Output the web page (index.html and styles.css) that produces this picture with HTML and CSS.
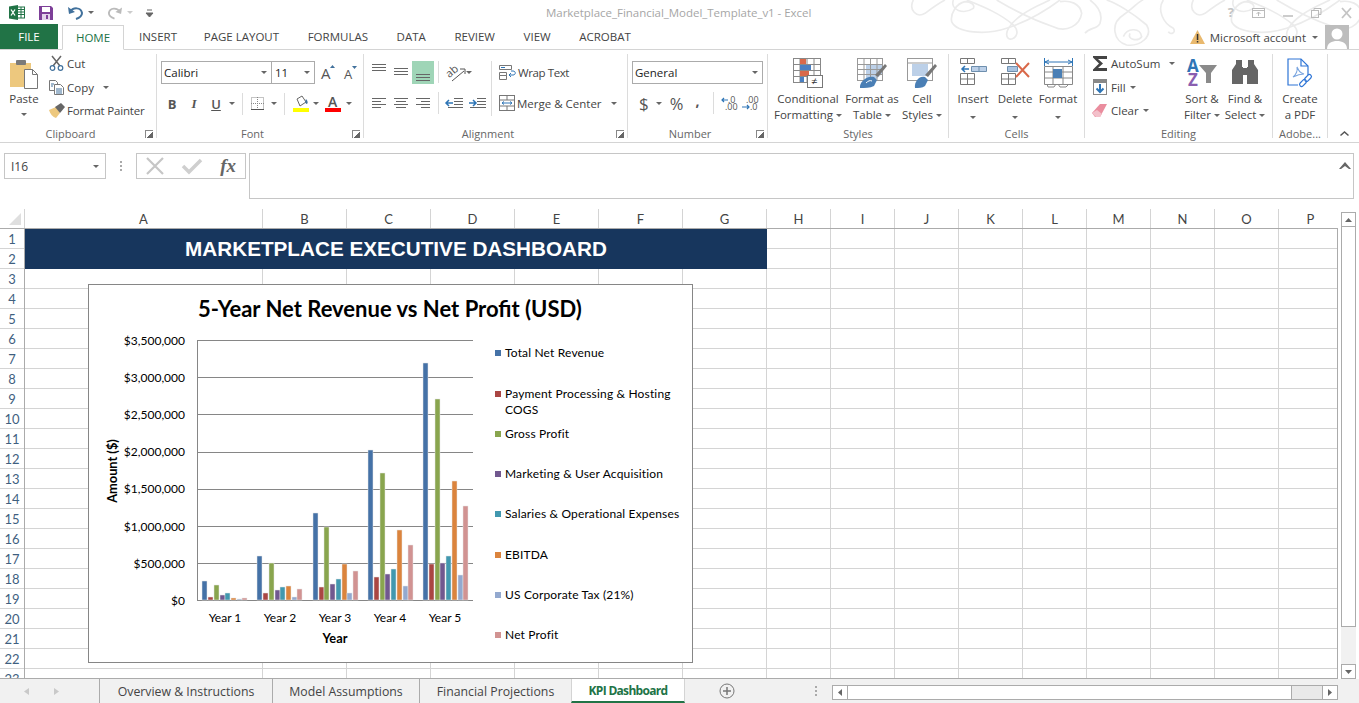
FILE: index.html
```html
<!DOCTYPE html>
<html lang="en">
<head>
<meta charset="UTF-8">
<title>Marketplace_Financial_Model_Template_v1 - Excel</title>
<link rel="stylesheet" href="styles.css">
</head>
<body>
<div class="app">

  <!-- title bar -->
  <div class="titlebar">
    <svg class="flourish" width="449" height="50" viewBox="0 0 1347 150" fill="none" stroke="#ebebeb" stroke-width="5">
      <g id="swirl">
        <path d="M10 0C-5 30 20 55 45 40 65 25 85 10 105 0"/>
        <path d="M130 0c-10 30 30 45 60 25 5-10-5-20-25-20-25 5-45 35-40 60 15 35 105 40 165 20 60-20 120-55 160-85"/>
        <path d="M170 0c50 20 100 40 140 75 25 25 0 50-15 40-15-15 5-45 40-70 35-25 65-35 85-45"/>
        <path d="M260 0c50 30 110 60 170 80 40 20 80-5 85-40-5-30-35-40-65-35"/>
        <path d="M525 100c15-20 35-10 45-30 10-30-10-55-30-70"/>
        <path d="M590 0c30 10 80 40 120 75 20 35-20 65-60 60-40-10-50-65-10-90 30-20 50-45 60-45"/>
        <path d="M640 110c10-25 50-30 55 0-10 15-45 10-35-10"/>
        <path d="M760 0c-20 30 0 70 30 85 10 15-10 20-15 10"/>
      </g>
      <use href="#swirl" x="840"/>
    </svg>
    <div class="qat">
      <svg class="ic-xl" width="16" height="15" viewBox="0 0 16 15"><rect x="6" y="2" width="9.500" height="11" fill="#fff" stroke="#217346"/><path d="M9 4.500h6M9 7h6M9 9.500h6M12 2v11" stroke="#217346" fill="none"/><path d="M0 1.500L9 0v15l-9-1.500z" fill="#217346"/><path d="M2 4.500l4 6M6 4.500l-4 6" stroke="#fff" stroke-width="1.300"/></svg>
      <svg class="ic-save" width="14" height="14" viewBox="0 0 14 14"><path d="M0 0h12l2 2v12H0z" fill="#7d3f98"/><rect x="3" y="1" width="8" height="5" fill="#fff"/><rect x="3" y="8" width="8" height="6" fill="#e3d3ea"/><rect x="7" y="9" width="2" height="4" fill="#7d3f98"/></svg>
      <svg class="undo" width="16" height="14" viewBox="0 0 16 14" fill="none"><path d="M2 6c3-5 11-5 12 1 0 3-3 5-6 6" stroke="#41719c" stroke-width="2"/><path d="M0 1l1 7 6-2z" fill="#41719c"/></svg>
      <i class="caret q1"></i>
      <svg class="redo" width="15" height="14" viewBox="0 0 16 14" fill="none"><path d="M14 6C11 1 3 1 2 7c0 3 3 5 6 6" stroke="#bbb" stroke-width="2"/><path d="M16 1l-1 7-6-2z" fill="#bbb"/></svg>
      <i class="caret q2"></i>
      <svg class="custom" width="7" height="8" viewBox="0 0 7 8"><path d="M1 1h5M0 4h7l-3.500 4z" stroke="#666" fill="#666" stroke-width="1"/></svg>
    </div>
    <div class="doc-title">Marketplace_Financial_Model_Template_v1 - Excel</div>
    <div class="win-btns">
      <span class="win-help">?</span>
      <svg width="13" height="10" viewBox="0 0 13 10" fill="none" stroke="#bbb"><rect x=".5" y=".5" width="12" height="9"/><path d="M.5 2.500h12"/><path d="M6.500 8V4M4.500 6l2-2 2 2"/></svg>
      <svg width="10" height="10" viewBox="0 0 10 10"><rect y="7" width="10" height="2" fill="#ccc"/></svg>
      <svg width="11" height="10" viewBox="0 0 11 10" fill="none" stroke="#bbb"><rect x=".5" y="2.500" width="7" height="7"/><path d="M3 2.500v-2h7v6H7.500" /></svg>
      <svg width="13" height="10" viewBox="0 0 13 10" stroke="#c4c4c4" stroke-width="1.800"><path d="M2 0l9 10M11 0L2 10"/></svg>
    </div>
  </div>

  <!-- tabs -->
  <div class="tabs">
    <div class="tab-file">FILE</div>
    <div class="tab-home">HOME</div>
    <div class="tab">INSERT</div>
    <div class="tab">PAGE LAYOUT</div>
    <div class="tab">FORMULAS</div>
    <div class="tab">DATA</div>
    <div class="tab">REVIEW</div>
    <div class="tab">VIEW</div>
    <div class="tab">ACROBAT</div>
    <div class="account">
      <svg width="15" height="14" viewBox="0 0 15 14"><path d="M7.500 0L15 14H0z" fill="#e9b96e"/><rect x="6.800" y="4" width="1.500" height="6" fill="#333"/><rect x="6.800" y="11" width="1.500" height="1.500" fill="#333"/></svg>
      <span class="acct-name">Microsoft account</span>
      <i class="caret"></i>
      <svg class="avatar" width="24" height="24" viewBox="0 0 24 24"><rect width="24" height="24" fill="#bdbdbd"/><circle cx="12" cy="9" r="5.500" fill="#fff"/><path d="M2 24c0-6 5-8 10-8s10 2 10 8z" fill="#fff"/></svg>
    </div>
  </div>

  <!-- ribbon -->
  <div class="ribbon">
    <div class="group g-clip">
      <div class="group-body clip-body">
        <div class="big paste">
          <svg width="28" height="28" viewBox="0 0 28 28"><path d="M0 3h21v24H0z" fill="#edc87e"/><rect x="6" y="0" width="10" height="5" rx="1" fill="#7a7a7a"/><path d="M14.500 9.500h8l5 5v14h-13z" fill="#fff" stroke="#777"/><path d="M22.500 9.500v5h5" fill="none" stroke="#777"/></svg>
          <span>Paste</span>
          <i class="caret"></i>
        </div>
        <div class="clip-list">
          <div class="rowitem"><svg width="15" height="15" viewBox="0 0 15 15" fill="none"><path d="M3 0l8 10M12 0L4 10" stroke="#666" stroke-width="1.500"/><circle cx="3.500" cy="12" r="2.300" stroke="#41719c" stroke-width="1.200"/><circle cx="11.500" cy="12" r="2.300" stroke="#41719c" stroke-width="1.200"/></svg><span>Cut</span></div>
          <div class="rowitem"><svg width="15" height="15" viewBox="0 0 15 15" fill="#fff" stroke="#777"><path d="M.5.500h6l2 2v8H.5z"/><path d="M5.500 4.500h6l3 3v7h-9z"/><path d="M7 9h6M7 11h6M7 13h6M2 4h3M2 6h2" stroke="#41719c"/></svg><span>Copy</span><i class="caret copy-caret"></i></div>
          <div class="rowitem"><svg width="16" height="15" viewBox="0 0 16 15"><path d="M0 7l7-3 4 6-4 5c-3-1-6-4-7-8z" fill="#edc87e"/><path d="M6 4l6-4 4 4-5 6z" fill="#666"/></svg><span class="painter">Format Painter</span></div>
        </div>
      </div>
      <div class="group-label has-launcher">Clipboard<i class="launcher"></i></div>
    </div>

    <div class="group g-font">
      <div class="group-body font-body">
        <div class="font-row">
          <div class="combo font-name">Calibri<i class="caret"></i></div>
          <div class="combo font-size">11<i class="caret"></i></div>
          <svg class="grow" width="15" height="15" viewBox="0 0 15 15"><text x="0" y="14" class="big-a">A</text><path d="M9 3l2.500-3L14 3z" fill="#41719c"/></svg>
          <svg class="shrink" width="13" height="13" viewBox="0 0 13 13"><text x="0" y="13" class="small-a">A</text><path d="M8 0h5l-2.500 3z" fill="#41719c"/></svg>
        </div>
        <div class="font-row row2">
          <b class="fmt">B</b>
          <i class="fmt it">I</i>
          <u class="fmt und">U</u>
          <i class="caret c-u"></i>
          <i class="vsep"></i>
          <svg class="borders" width="13" height="13" viewBox="0 0 13 13" fill="none" stroke="#888" stroke-dasharray="1 1"><rect x=".5" y=".5" width="12" height="12"/><path d="M6.500 0v13M0 6.500h13"/><path d="M0 12.500h13" stroke="#555" stroke-dasharray="none"/></svg>
          <i class="caret c-b"></i>
          <i class="vsep"></i>
          <svg class="fill" width="16" height="17" viewBox="0 0 16 17"><path d="M4 4l5-3 4 6-6 4z" fill="#fff" stroke="#666"/><path d="M13 4c2 2 2 4 1 5-2 0-2-3-1-5z" fill="#41719c"/><rect y="13" width="16" height="4" fill="#ffff00"/></svg>
          <i class="caret c-f"></i>
          <svg class="fcolor" width="16" height="17" viewBox="0 0 16 17"><text x="3" y="12" class="color-a">A</text><rect y="13" width="16" height="4" fill="#ff0000"/></svg>
          <i class="caret c-c"></i>
        </div>
      </div>
      <div class="group-label has-launcher">Font<i class="launcher"></i></div>
    </div>

    <div class="group g-align">
      <div class="group-body align-body">
        <div class="align-left">
          <div class="align-row">
            <svg class="ai" width="22" height="23" viewBox="0 0 22 23"><path d="M4 3.500h14M4 6.500h14M4 9.500h14" stroke="#666" fill="none"/></svg>
            <svg class="ai" width="22" height="23" viewBox="0 0 22 23"><path d="M4 7.500h14M4 10.500h14M4 13.500h14" stroke="#666" fill="none"/></svg>
            <svg class="ai on" width="22" height="23" viewBox="0 0 22 23"><path d="M4 13.500h14M4 16.500h14M4 19.500h14" stroke="#666" fill="none"/></svg>
            <i class="vsep"></i>
            <svg class="orient" width="20" height="18" viewBox="0 0 20 18"><text x="0" y="11" class="orient-t" transform="rotate(-40 6 8)">ab</text><path d="M6 17l12-10M14 5h5v5" fill="none" stroke="#555"/></svg>
            <i class="caret"></i>
          </div>
          <div class="align-row row2">
            <svg class="ai" width="22" height="16" viewBox="0 0 22 16"><path d="M4 2.500h14M4 5.500h9M4 8.500h14M4 11.500h9" stroke="#666" fill="none"/></svg>
            <svg class="ai" width="22" height="16" viewBox="0 0 22 16"><path d="M4 2.500h14M6 5.500h10M4 8.500h14M6 11.500h10" stroke="#666" fill="none"/></svg>
            <svg class="ai" width="22" height="16" viewBox="0 0 22 16"><path d="M4 2.500h14M9 5.500h9M4 8.500h14M9 11.500h9" stroke="#666" fill="none"/></svg>
            <i class="vsep"></i>
            <svg class="ai indent" width="22" height="16" viewBox="0 0 22 16"><path d="M10 2.500h9M10 5.500h9M10 8.500h9M4 11.500h15" stroke="#666" fill="none"/><path d="M2 7h7M5 4L2 7l3 3" stroke="#2e75b6" stroke-width="1.500" fill="none"/></svg>
            <svg class="ai" width="22" height="16" viewBox="0 0 22 16"><path d="M11 2.500h9M11 5.500h9M11 8.500h9M4 11.500h16" stroke="#666" fill="none"/><path d="M3 7h7M7 4l3 3-3 3" stroke="#2e75b6" stroke-width="1.500" fill="none"/></svg>
          </div>
        </div>
        <i class="vsep tall"></i>
        <div class="align-right">
          <div class="rowitem"><svg width="17" height="15" viewBox="0 0 17 15" fill="none" stroke="#777"><path d="M.5.500h12v4H.5zM.5 7.500h7v3h-7zM.5 10.500h7v4h-7z"/><path d="M2 2.500h4" stroke="#2e75b6"/><path d="M10 10h4c3 0 3-4 0-4h-2M12 8l-2 2 2 2" stroke="#2e75b6"/></svg><span class="wrap-t">Wrap Text</span></div>
          <div class="rowitem merge"><svg width="16" height="16" viewBox="0 0 16 16" fill="none" stroke="#777"><rect x=".5" y=".5" width="15" height="15"/><path d="M.5 5h15M.5 11h15M8 .5V5M8 11v4.500"/><path d="M3 8h10M5 6.500L3 8l2 1.500M11 6.500L13 8l-2 1.500" stroke="#2e75b6"/></svg><span>Merge &amp; Center</span><i class="caret"></i></div>
        </div>
      </div>
      <div class="group-label has-launcher">Alignment<i class="launcher"></i></div>
    </div>

    <div class="group g-num">
      <div class="group-body num-body">
        <div class="combo num-format">General<i class="caret"></i></div>
        <div class="num-row">
          <span class="dollar">$</span><i class="caret"></i>
          <span class="pct">%</span>
          <span class="comma">,</span>
          <i class="vsep"></i>
          <svg width="20" height="15" viewBox="0 0 20 15"><text x="7" y="7" class="dec">.0</text><text x="4" y="14" class="dec">.00</text><path d="M7 4H1M3 2L1 4l2 2" stroke="#2e75b6" stroke-width="1.200" fill="none"/></svg>
          <svg width="20" height="15" viewBox="0 0 20 15"><text x="5" y="7" class="dec">.00</text><text x="9" y="14" class="dec">.0</text><path d="M1 11h7M6 9l2 2-2 2" stroke="#2e75b6" stroke-width="1.200" fill="none"/></svg>
        </div>
      </div>
      <div class="group-label has-launcher">Number<i class="launcher"></i></div>
    </div>

    <div class="group g-styles">
      <div class="group-body tools">
        <div class="big w-cond">
          <svg width="30" height="30" viewBox="0 0 30 30"><g fill="none" stroke="#888"><rect x=".5" y=".5" width="27" height="24"/><path d="M7 .5v24M14 .5v24M21 .5v24M.5 6.500h27M.5 12.500h27M.5 18.500h27"/></g><rect x="7" y="1" width="6" height="5" fill="#d9694a"/><rect x="7" y="7" width="11" height="5" fill="#4a7fc1"/><rect x="7" y="13" width="9" height="5" fill="#d9694a"/><rect x="7" y="19" width="4" height="5" fill="#4a7fc1"/><rect x="14.500" y="17.500" width="15" height="12" fill="#fff" stroke="#777"/><text x="18" y="27" class="neq">≠</text></svg>
          <span>Conditional<br>Formatting<i class="caret inl"></i></span>
        </div>
        <div class="big w-table">
          <svg width="30" height="30" viewBox="0 0 30 30"><path d="M9 7h17v8l-8 7H9z" fill="#bcd0e8"/><g fill="none" stroke="#999"><rect x=".5" y=".5" width="25" height="22"/><path d="M.5 6.500h25M.5 11.500h25M.5 16.500h25M7 .5v22M13.500 .5v22M20 .5v22"/></g><path d="M28 6l2 2-9 11-3-2z" fill="#777"/><path d="M3 30c-1-6 7-13 14-11l3 3-3 6c-4 2-9 2-14 2z" fill="#4a7fb5"/><path d="M9 25c2-2 4-3 6-2" stroke="#fff" fill="none"/></svg>
          <span>Format as<br>Table<i class="caret inl"></i></span>
        </div>
        <div class="big w-cell">
          <svg width="30" height="30" viewBox="0 0 30 30"><rect x=".5" y=".5" width="25" height="22" fill="#fff" stroke="#999"/><path d="M.5 5h25" stroke="#999"/><rect x="5" y="6" width="16" height="12" fill="#bcd0e8"/><path d="M28 6l2 2-9 11-3-2z" fill="#777"/><path d="M8 30c-1-6 4-13 10-11l3 3-3 6c-3 2-6 2-10 2z" fill="#4a7fb5"/></svg>
          <span>Cell<br>Styles<i class="caret inl"></i></span>
        </div>
      </div>
      <div class="group-label">Styles</div>
    </div>

    <div class="group g-cells">
      <div class="group-body tools">
        <div class="big w-ins">
          <svg width="27" height="30" viewBox="0 0 27 30" fill="none" stroke="#777"><path d="M.5 .5h14v5H.5zM7.500 .5v5M.5 15.500h14v11H.5zM.5 21h14M7.500 15.500v11"/><path d="M11.500 8.500h15v5h-15zM19 8.500v5" stroke="#6e8fae" fill="#bcd0e8"/><path d="M9 11H2M5 8l-3 3 3 3" stroke="#2e75b6" stroke-width="1.500"/></svg>
          <span>Insert<br><i class="caret"></i></span>
        </div>
        <div class="big w-del">
          <svg width="29" height="30" viewBox="0 0 29 30" fill="none" stroke="#777"><path d="M.5 .5h14v5H.5zM7.500 .5v5M.5 15.500h14v11H.5zM.5 21h14M7.500 15.500v11"/><path d="M6.500 8.500h10v5h-10z" stroke="#6e8fae" fill="#a9c3e0"/><path d="M15 5l13 14M28 5L15 19" stroke="#d9694a" stroke-width="2"/></svg>
          <span>Delete<br><i class="caret"></i></span>
        </div>
        <div class="big w-fmt">
          <svg width="29" height="30" viewBox="0 0 29 30" fill="none"><path d="M1 4h27" stroke="#2e75b6"/><path d="M.5 0v8M28.500 0v8M5 2L1 4l4 2M24 2l4 2-4 2" stroke="#2e75b6"/><path d="M.5 8.500h28v18H.5z" stroke="#888"/><path d="M9 8.500v18M19 8.500v18M.5 14h28M.5 20h28" stroke="#888"/><rect x="9" y="11" width="9" height="9" fill="#4a7fb5"/><path d="M3 26l1 3h6l2-3M14 26l2 3h6l3-3" stroke="#888"/></svg>
          <span>Format<br><i class="caret"></i></span>
        </div>
      </div>
      <div class="group-label">Cells</div>
    </div>

    <div class="group g-edit">
      <div class="group-body edit-body">
        <div class="edit-list">
          <div class="rowitem"><svg width="16" height="15" viewBox="0 0 16 15"><path d="M1 0h14v3H6l5 4.500L6 12h9v3H1v-1.500L7 7.500 1 1.500z" fill="#444"/></svg><span>AutoSum</span><i class="caret auto-caret"></i></div>
          <div class="rowitem"><svg width="16" height="16" viewBox="0 0 16 16" fill="none"><rect x="1.500" y=".5" width="13" height="15" stroke="#888" fill="#fff"/><rect x="2" y="1" width="12" height="3" fill="#888"/><path d="M8 5v8M4.500 9.500L8 13l3.500-3.500" stroke="#2e75b6" stroke-width="2"/></svg><span>Fill</span><i class="caret"></i></div>
          <div class="rowitem"><svg width="16" height="13" viewBox="0 0 16 13"><path d="M0 9l8-9h7L8 13H3z" fill="#ea8d9e"/><path d="M0 9l4 4h4l2-3-5-4z" fill="#f3c0ca"/></svg><span>Clear</span><i class="caret"></i></div>
        </div>
        <div class="big w-sort">
          <svg width="30" height="30" viewBox="0 0 30 30"><text x="0" y="14" class="sort-a">A</text><text x="1" y="28" class="sort-z">Z</text><path d="M12 7h18l-6 8v10h-5V15z" fill="#8a8a8a"/></svg>
          <span>Sort &amp;<br>Filter<i class="caret inl"></i></span>
        </div>
        <div class="big w-find">
          <svg width="26" height="24" viewBox="0 0 26 24" fill="#666"><path d="M0 24V10l4-6V0h6v7h1v17z"/><path d="M26 24V10l-4-6V0h-6v7h-1v17z"/><rect x="11" y="8" width="4" height="7"/></svg>
          <span>Find &amp;<br>Select<i class="caret inl"></i></span>
        </div>
      </div>
      <div class="group-label">Editing</div>
    </div>

    <div class="group g-adobe">
      <div class="group-body tools">
        <div class="big w-pdf">
          <svg width="26" height="30" viewBox="0 0 26 30" fill="none" stroke="#2e75d6" stroke-width="1.200"><path d="M11 27H1V1h13l7 7v9"/><path d="M14 1v7h7"/><path d="M6 19c3-2 5-7 4-10 2 4 3 6 7 7-3 0-7 1-11 3z" stroke="#7aa5df"/><rect x="12" y="23" width="8" height="4" rx="2" transform="rotate(-45 16 25)"/><rect x="17" y="18" width="8" height="4" rx="2" transform="rotate(-45 21 20)"/></svg>
          <span>Create<br>a PDF</span>
        </div>
      </div>
      <div class="group-label">Adobe...</div>
    </div>
    <div class="collapse"><svg width="9" height="5" viewBox="0 0 9 5" fill="none" stroke="#555" stroke-width="1.500"><path d="M.5 4.500l4-3.500 4 3.500"/></svg></div>
  </div>

  <!-- formula bar -->
  <div class="formula">
    <div class="namebox">I16<i class="caret"></i></div>
    <div class="dots"></div>
    <div class="fx-btns">
      <svg width="18" height="16" viewBox="0 0 18 16" stroke="#c6c6c6" stroke-width="2.200"><path d="M1 0l16 16M17 0L1 16"/></svg>
      <svg width="20" height="16" viewBox="0 0 20 16" fill="none" stroke="#cfcfcf" stroke-width="3.500"><path d="M1 8l6 6L19 2"/></svg>
      <span class="fx">fx</span>
    </div>
    <div class="fbox"><svg width="12" height="7" viewBox="0 0 12 7"><path d="M0 7l6-7 6 7-2 0-4-3-4 3z" fill="#666"/></svg></div>
  </div>

  <!-- sheet -->
  <div class="sheet">
    <div class="grid-wrap">
      <div class="col-heads">
        <div class="corner"><i></i></div>
        <div class="ch a">A</div><div class="ch b">B</div><div class="ch b">C</div><div class="ch b">D</div><div class="ch b">E</div><div class="ch b">F</div><div class="ch b">G</div>
        <div class="ch c">H</div><div class="ch c">I</div><div class="ch c">J</div><div class="ch c">K</div><div class="ch c">L</div><div class="ch c">M</div><div class="ch c">N</div><div class="ch c">O</div><div class="ch last">P</div>
      </div>
      <div class="body-wrap">
        <div class="row-heads">
          <div class="rh">1</div><div class="rh">2</div><div class="rh">3</div><div class="rh">4</div><div class="rh">5</div><div class="rh">6</div><div class="rh">7</div><div class="rh">8</div><div class="rh">9</div><div class="rh">10</div><div class="rh">11</div><div class="rh">12</div><div class="rh">13</div><div class="rh">14</div><div class="rh">15</div><div class="rh">16</div><div class="rh">17</div><div class="rh">18</div><div class="rh">19</div><div class="rh">20</div><div class="rh">21</div><div class="rh">22</div><div class="rh">23</div>
        </div>
        <div class="cells">
          <div class="gc a"></div><div class="gc b"></div><div class="gc b"></div><div class="gc b"></div><div class="gc b"></div><div class="gc b"></div><div class="gc b"></div>
          <div class="gc c"></div><div class="gc c"></div><div class="gc c"></div><div class="gc c"></div><div class="gc c"></div><div class="gc c"></div><div class="gc c"></div><div class="gc c"></div>

          <div class="banner">MARKETPLACE EXECUTIVE DASHBOARD</div>

          <!-- chart sits on top of the cells -->
          <div class="chart">
            <svg width="603" height="377" viewBox="0 0 603 377">
              <text x="301" y="32" class="c-title" text-anchor="middle">5-Year Net Revenue vs Net Profit (USD)</text>
              <g class="c-axis" text-anchor="end">
                <text x="96" y="60">$3,500,000</text>
                <text x="96" y="97">$3,000,000</text>
                <text x="96" y="134">$2,500,000</text>
                <text x="96" y="171">$2,000,000</text>
                <text x="96" y="208">$1,500,000</text>
                <text x="96" y="246">$1,000,000</text>
                <text x="96" y="283">$500,000</text>
                <text x="96" y="320">$0</text>
              </g>
              <g stroke="#868686">
                <path d="M108 55.500h276M108 92.500h276M108 129.500h276M108 167.500h276M108 204.500h276M108 241.500h276M108 278.500h276M108 315.500h276M108.500 55v261"/>
              </g>
              <g class="bars">
                <g fill="#4572a7"><rect x="113" y="296" width="5" height="19"/><rect x="168" y="271" width="5" height="44"/><rect x="224" y="228" width="5" height="87"/><rect x="279" y="165" width="5" height="150"/><rect x="334" y="78" width="5" height="237"/></g>
                <g fill="#aa4643"><rect x="119" y="312" width="5" height="3"/><rect x="174" y="308" width="5" height="7"/><rect x="230" y="302" width="5" height="13"/><rect x="285" y="292" width="5" height="23"/><rect x="340" y="279" width="5" height="36"/></g>
                <g fill="#89a54e"><rect x="125" y="300" width="5" height="15"/><rect x="180" y="278" width="5" height="37"/><rect x="235" y="242" width="5" height="73"/><rect x="291" y="188" width="5" height="127"/><rect x="346" y="114" width="5" height="201"/></g>
                <g fill="#71588f"><rect x="131" y="310" width="5" height="5"/><rect x="186" y="305" width="5" height="10"/><rect x="241" y="299" width="5" height="16"/><rect x="296" y="289" width="5" height="26"/><rect x="351" y="278" width="5" height="37"/></g>
                <g fill="#4198af"><rect x="136" y="308" width="5" height="7"/><rect x="191" y="302" width="5" height="13"/><rect x="247" y="294" width="5" height="21"/><rect x="302" y="284" width="5" height="31"/><rect x="357" y="271" width="5" height="44"/></g>
                <g fill="#db843d"><rect x="142" y="313" width="5" height="2"/><rect x="197" y="301" width="5" height="14"/><rect x="253" y="279" width="5" height="36"/><rect x="308" y="245" width="5" height="70"/><rect x="363" y="196" width="5" height="119"/></g>
                <g fill="#93a9cf"><rect x="148" y="314" width="5" height="1"/><rect x="203" y="312" width="5" height="3"/><rect x="258" y="308" width="5" height="7"/><rect x="314" y="301" width="5" height="14"/><rect x="369" y="290" width="5" height="25"/></g>
                <g fill="#d19392"><rect x="153" y="313" width="5" height="2"/><rect x="208" y="304" width="5" height="11"/><rect x="264" y="286" width="5" height="29"/><rect x="319" y="260" width="5" height="55"/><rect x="374" y="221" width="5" height="94"/></g>
              </g>
              <g class="c-axis" text-anchor="middle">
                <text x="136" y="337">Year 1</text>
                <text x="191" y="337">Year 2</text>
                <text x="246" y="337">Year 3</text>
                <text x="301" y="337">Year 4</text>
                <text x="356" y="337">Year 5</text>
              </g>
              <text x="246" y="358" class="c-bold" text-anchor="middle">Year</text>
              <text class="c-bold" text-anchor="middle" transform="translate(28 186) rotate(-90)">Amount ($)</text>
              <g class="c-legend">
                <rect x="406" y="65" width="6" height="6" fill="#4572a7"/><text x="416" y="72">Total Net Revenue</text>
                <rect x="406" y="106" width="6" height="6" fill="#aa4643"/><text x="416" y="113">Payment Processing &amp; Hosting</text><text x="416" y="129">COGS</text>
                <rect x="406" y="146" width="6" height="6" fill="#89a54e"/><text x="416" y="153">Gross Profit</text>
                <rect x="406" y="186" width="6" height="6" fill="#71588f"/><text x="416" y="193">Marketing &amp; User Acquisition</text>
                <rect x="406" y="226" width="6" height="6" fill="#4198af"/><text x="416" y="233">Salaries &amp; Operational Expenses</text>
                <rect x="406" y="267" width="6" height="6" fill="#db843d"/><text x="416" y="274">EBITDA</text>
                <rect x="406" y="307" width="6" height="6" fill="#93a9cf"/><text x="416" y="314">US Corporate Tax (21%)</text>
                <rect x="406" y="347" width="6" height="6" fill="#d19392"/><text x="416" y="354">Net Profit</text>
              </g>
            </svg>
          </div>
        </div>
      </div>
    </div>
    <div class="vscroll">
      <div class="sb-btn"><svg width="7" height="4" viewBox="0 0 7 4"><path d="M0 4l3.500-4L7 4z" fill="#666"/></svg></div>
      <div class="sb-thumb"></div>
      <div class="sb-track"></div>
      <div class="sb-btn"><svg width="7" height="4" viewBox="0 0 7 4"><path d="M0 0l3.500 4L7 0z" fill="#666"/></svg></div>
    </div>
  </div>

  <!-- sheet tabs -->
  <div class="statusbar">
    <div class="nav-arrows">
      <svg width="5" height="7" viewBox="0 0 5 7"><path d="M5 0L0 3.500 5 7z" fill="#c9c9c9"/></svg>
      <svg width="5" height="7" viewBox="0 0 5 7"><path d="M0 0l5 3.500L0 7z" fill="#c9c9c9"/></svg>
    </div>
    <div class="stab s1">Overview &amp; Instructions</div>
    <div class="stab s2">Model Assumptions</div>
    <div class="stab s3">Financial Projections</div>
    <div class="stab active">KPI Dashboard</div>
    <svg class="plus" width="16" height="16" viewBox="0 0 16 16" fill="none" stroke="#777"><circle cx="8" cy="8" r="7"/><path d="M8 4v8M4 8h8" stroke-width="1.500"/></svg>
    <div class="dots hdots"></div>
    <div class="hscroll">
      <div class="hb"><svg width="4" height="7" viewBox="0 0 4 7"><path d="M4 0L0 3.500 4 7z" fill="#666"/></svg></div>
      <div class="h-thumb"></div>
      <div class="h-track"></div>
      <div class="hb right"><svg width="4" height="7" viewBox="0 0 4 7"><path d="M0 0l4 3.500L0 7z" fill="#666"/></svg></div>
    </div>
  </div>
</div>
</body>
</html>
```

FILE: styles.css
```css
* {
    box-sizing: border-box;
}

html, body {
    margin: 0;
    padding: 0;
    height: 100%;
    overflow: hidden;
}

body {
    background: #fff;
    font-family: "Open Sans", "Noto Sans", sans-serif;
    font-size: 12px;
    color: #444;
}

.app {
    width: 1359px;
    height: 703px;
    display: flex;
    flex-direction: column;
}

svg {
    display: block;
    flex: none;
    overflow: visible;
}

/* little down arrow used all over the ribbon */
.caret {
    display: inline-block;
    width: 0;
    height: 0;
    border-left: 3.5px solid transparent;
    border-right: 3.5px solid transparent;
    border-top: 3.5px solid #666;
    flex: none;
}

.caret.inl {
    margin-left: 3px;
    vertical-align: 2px;
}

/* title bar */
.titlebar {
    height: 25px;
    position: relative;
    display: flex;
    align-items: center;
    flex: none;
}

.flourish {
    position: absolute;
    right: 0;
    top: 0;
    overflow: hidden;
}

.qat {
    display: flex;
    align-items: center;
    width: 546px;
    padding-left: 9px;
    flex: none;
}

.ic-save {
    margin-left: 14px;
}

.undo {
    margin-left: 15px;
}

.q1 {
    margin-left: 4px;
}

.redo {
    margin-left: 13px;
}

.q2 {
    margin-left: 5px;
    border-top-color: #ccc;
}

.custom {
    margin-left: 13px;
}

.doc-title {
    color: #a6a6a6;
    font-size: 11.5px;
    letter-spacing: -.03px;
    position: relative;
}

.win-btns {
    position: absolute;
    right: 6px;
    top: 6px;
    display: flex;
    gap: 18px;
    align-items: center;
}

.win-help {
    font: bold 13px "Open Sans", sans-serif;
    color: #c4c4c4;
    line-height: 13px;
}

/* ribbon tabs */
.tabs {
    height: 25px;
    display: flex;
    align-items: flex-end;
    border-bottom: 1px solid #d4d4d4;
    flex: none;
    position: relative;
    font-size: 11.5px;
}

.tab-file {
    width: 58px;
    height: 25px;
    background: #217346;
    color: #fff;
    display: flex;
    align-items: center;
    justify-content: center;
}

.tab-home {
    width: 62px;
    height: 25px;
    margin-left: 4px;
    border: 1px solid #d4d4d4;
    border-bottom: 1px solid #fff;
    margin-bottom: -1px;
    background: #fff;
    color: #217346;
    display: flex;
    align-items: center;
    justify-content: center;
    z-index: 1;
}

.tab {
    height: 25px;
    padding: 0 14.3px;
    display: flex;
    align-items: center;
}

.tab-home + .tab {
    padding-left: 15px;
    padding-right: 12.5px;
}

.account {
    margin-left: auto;
    height: 24px;
    display: flex;
    align-items: center;
    padding-right: 10px;
    position: relative;
}

.acct-name {
    color: #444;
    margin: 0 6px 0 5px;
}

.avatar {
    margin-left: 7px;
}

/* ribbon */
.ribbon {
    height: 93px;
    display: flex;
    border-bottom: 1px solid #d4d4d4;
    flex: none;
    padding-top: 4px;
    position: relative;
    font-size: 11.5px;
}

.group {
    display: flex;
    flex-direction: column;
    border-right: 1px solid #dcdcdc;
    height: 84px;
    flex: none;
    position: relative;
}

.group-body {
    height: 71px;
    flex: none;
}

.group-label {
    text-align: center;
    font-size: 11px;
    color: #666;
    height: 13px;
    line-height: 18px;
}

.has-launcher {
    padding-right: 15px;
}

.launcher {
    position: absolute;
    right: 3px;
    bottom: 0;
    width: 8px;
    height: 8px;
    border-left: 1px solid #888;
    border-top: 1px solid #888;
    background: linear-gradient(135deg, transparent 55%, #666 55%);
}

.g-clip { width: 157px; }
.g-font { width: 207px; }
.g-align { width: 264px; }
.g-num { width: 140px; }
.g-styles { width: 181px; }
.g-cells { width: 136px; }
.g-edit { width: 188px; }
.g-adobe { width: 55px; }

.clip-body {
    display: flex;
    padding-left: 9px;
}

.big {
    display: flex;
    flex-direction: column;
    align-items: center;
    line-height: 16px;
    text-align: center;
    flex: none;
}

.big > span {
    display: block;
    margin-top: 3px;
    white-space: nowrap;
}

.paste {
    width: 30px;
    margin-right: 10px;
    padding-top: 6px;
}

.paste > span {
    margin-top: 3px;
}

.paste .caret {
    margin-top: 6px;
}

.clip-list {
    display: flex;
    flex-direction: column;
    margin-top: -2px;
}

.rowitem {
    display: flex;
    align-items: center;
    height: 23.5px;
    white-space: nowrap;
}

.rowitem > span {
    margin-left: 3px;
}

.rowitem > .caret {
    margin-left: 4px;
}

.rowitem > .copy-caret {
    margin-left: 9px;
}

.painter {
    letter-spacing: -.2px;
    margin-left: 2px !important;
}

.font-body {
    padding: 7px 0 0 4px;
}

.font-row {
    display: flex;
    align-items: center;
    height: 23px;
}

.combo {
    height: 23px;
    border: 1px solid #ababab;
    padding-left: 2px;
    display: flex;
    align-items: center;
    justify-content: space-between;
    padding-right: 4px;
    color: #222;
}

.font-name {
    width: 111px;
}

.font-size {
    width: 43px;
    border-left: 0;
    padding-left: 3px;
}

.grow {
    margin-left: 6px;
}

.shrink {
    margin-left: 8px;
}

.big-a, .small-a, .color-a {
    font-family: "Open Sans", sans-serif;
    fill: #555;
}

.big-a { font-size: 15px; }
.small-a { font-size: 13px; }
.color-a { font-size: 14px; font-weight: 600; }

.row2 {
    margin-top: 8px;
}

.fmt {
    width: 22px;
    text-align: center;
    font-style: normal;
    font-size: 13px;
    color: #555;
    flex: none;
}

.it {
    font-style: italic;
    font-family: "Liberation Serif", serif;
    font-weight: bold;
}

.und {
    font-weight: 600;
}

.c-u { margin-left: 2px; }
.c-b { margin-left: 7px; }
.c-f { margin-left: 4px; }
.c-c { margin-left: 5px; }
.fcolor { margin-left: 6px; }

.vsep {
    display: block;
    width: 1px;
    height: 22px;
    background: #dcdcdc;
    margin: 0 8px 0 7px;
    flex: none;
}

.vsep.tall {
    height: 55px;
    margin: 0 7px 0 0;
}

.align-body {
    display: flex;
    padding: 7px 0 0 4px;
}

.align-left {
    width: 123px;
    flex: none;
}

.align-row {
    display: flex;
    align-items: flex-start;
    height: 23px;
}

.align-row .vsep {
    margin: 0 7px 0 4px;
}

.align-row .orient {
    margin-top: 3px;
}

.align-row .caret {
    margin: 10px 0 0 0;
}

.align-row.row2 {
    margin-top: 8px;
}

.row2 .ai {
    margin-top: 4px;
}

.row2 .indent {
    margin-left: -2px;
}

.ai.on {
    background: #9fd5b7;
}

.orient-t {
    font-size: 11px;
    fill: #555;
}

.align-right .rowitem > span {
    margin-left: 2px;
}

.wrap-t {
    letter-spacing: -.4px;
}

.merge {
    margin-top: 7px;
}

.merge .caret {
    margin-left: 9px;
}

.num-body {
    padding: 7px 0 0 4px;
}

.num-format {
    width: 131px;
}

.num-row {
    display: flex;
    align-items: center;
    height: 22px;
    margin-top: 8px;
    padding-left: 7px;
}

.dollar {
    font-size: 17px;
    color: #555;
}

.num-row .caret {
    margin-left: 7px;
}

.pct {
    font-size: 16.5px;
    color: #555;
    margin-left: 8px;
}

.comma {
    font-weight: bold;
    font-size: 14px;
    color: #555;
    margin: -6px 0 0 12px;
}

.num-row .vsep {
    margin: 0 7px 0 14px;
}

.dec {
    font: 9px "Open Sans", sans-serif;
    fill: #555;
}

.tools {
    display: flex;
    padding-top: 4px;
}

.neq {
    font: 11px "Open Sans", sans-serif;
    fill: #333;
}

.w-cond { width: 80px; }
.w-table { width: 48px; }
.w-cell { width: 52px; }
.g-cells .tools { padding-left: 3px; }
.w-ins { width: 42px; }
.w-del { width: 42px; }
.w-fmt { width: 44px; }
.w-pdf { width: 54px; }

.edit-body {
    display: flex;
    padding-left: 7px;
}

.edit-list {
    width: 89px;
    flex: none;
    margin-top: -2px;
}

.edit-list .rowitem > span {
    margin-left: 3px;
}

.auto-caret {
    margin-left: 9px !important;
}

.w-sort {
    width: 42px;
    padding-top: 4px;
}

.w-find {
    width: 44px;
    padding-top: 6px;
}

.w-find > span {
    margin-top: 7px;
}

.sort-a, .sort-z {
    font: bold 17px "Open Sans", sans-serif;
}

.sort-a { fill: #2e75b6; }
.sort-z { fill: #8a5fb0; }

.collapse {
    position: absolute;
    right: 10px;
    bottom: 6px;
}

/* formula bar */
.formula {
    height: 66px;
    display: flex;
    flex: none;
    padding: 10px 5px 0 4px;
    background: #fff;
}

.namebox {
    width: 102px;
    height: 26px;
    border: 1px solid #c6c6c6;
    display: flex;
    align-items: center;
    justify-content: space-between;
    padding: 0 6px;
    color: #444;
}

.dots {
    width: 2px;
    height: 10px;
    margin: 8px 14px 0 14px;
    background: repeating-linear-gradient(#aaa 0 2px, transparent 2px 4px);
}

.fx-btns {
    width: 110px;
    height: 26px;
    border: 1px solid #c6c6c6;
    display: flex;
    align-items: center;
    justify-content: space-between;
    padding: 0 9px 0 9px;
}

.fx {
    font: italic bold 19px "Liberation Serif", serif;
    color: #666;
    line-height: 20px;
}

.fbox {
    flex: 1;
    height: 46px;
    margin-left: 3px;
    border: 1px solid #c6c6c6;
    display: flex;
    justify-content: flex-end;
    padding: 8px 2px 0 0;
}

/* sheet */
.sheet {
    height: 470px;
    display: flex;
    flex: none;
    overflow: hidden;
}

.grid-wrap {
    width: 1338px;
    flex: none;
}

.col-heads {
    height: 20px;
    display: flex;
    border-bottom: 1px solid #ababab;
}

.corner {
    width: 25px;
    border-right: 1px solid #d4d4d4;
    position: relative;
    flex: none;
}

.corner i {
    position: absolute;
    right: 3px;
    bottom: 3px;
    width: 0;
    height: 0;
    border-left: 12px solid transparent;
    border-bottom: 12px solid #dfdfdf;
}

.ch {
    border-right: 1px solid #d4d4d4;
    text-align: center;
    font-family: "Lato", sans-serif;
    font-size: 13px;
    line-height: 20px;
    color: #444;
    flex: none;
}

.ch.a, .gc.a { width: 238px; }
.ch.b, .gc.b { width: 84px; }
.ch.c, .gc.c { width: 64px; }
.ch.last { width: 59px; border-right: 0; text-indent: 4px; }

.body-wrap {
    display: flex;
    height: 450px;
    border-bottom: 1px solid #ababab;
    border-right: 1px solid #ababab;
}

.row-heads {
    width: 25px;
    flex: none;
    border-right: 1px solid #ababab;
    overflow: hidden;
}

.rh {
    height: 20px;
    border-bottom: 1px solid #d4d4d4;
    text-align: center;
    font-family: "Lato", sans-serif;
    font-size: 13px;
    line-height: 21px;
    color: #3f5f7f;
}

.cells {
    flex: 1;
    display: flex;
    position: relative;
    background-image: linear-gradient(#d4d4d4 1px, transparent 1px);
    background-size: 100% 20px;
    background-position: 0 19px;
}

.gc {
    border-right: 1px solid #d4d4d4;
    flex: none;
}

.banner {
    position: absolute;
    left: 0;
    top: 0;
    width: 742px;
    height: 40px;
    background: #17365d;
    color: #fff;
    font: bold 20.7px "Liberation Sans", sans-serif;
    text-align: center;
    line-height: 40px;
}

.chart {
    position: absolute;
    left: 63px;
    top: 55px;
    width: 605px;
    height: 379px;
    background: #fff;
    border: 1px solid #868686;
}

.c-title {
    font: bold 22px "Lato", sans-serif;
    fill: #000;
}

.c-axis text {
    font: 12px "Lato", sans-serif;
    fill: #000;
}

.c-legend text {
    font: 12px "Lato", sans-serif;
    letter-spacing: .16px;
    fill: #000;
}

.c-bold {
    font: bold 12.8px "Lato", sans-serif;
    fill: #000;
}

.bars rect {
    stroke: #e6e6e6;
    stroke-width: .5;
}

/* scrollbars */
.vscroll {
    width: 15px;
    margin-left: 3px;
    margin-top: 3px;
    display: flex;
    flex-direction: column;
    background: #f1f1f1;
    flex: none;
}

.sb-btn {
    height: 15px;
    border: 1px solid #ababab;
    background: #fff;
    display: flex;
    align-items: center;
    justify-content: center;
    flex: none;
}

.sb-thumb {
    height: 400px;
    border: 1px solid #ababab;
    border-top: 0;
    background: #fff;
    flex: none;
}

.sb-track {
    flex: 1;
}

.statusbar {
    height: 24px;
    background: #f1f1f1;
    display: flex;
    align-items: center;
    flex: none;
}

.nav-arrows {
    width: 99px;
    display: flex;
    justify-content: flex-end;
    gap: 25px;
    padding-right: 40px;
    flex: none;
}

.stab {
    height: 24px;
    border-left: 1px solid #ababab;
    display: flex;
    align-items: center;
    justify-content: center;
    color: #444;
    white-space: nowrap;
    font-size: 12.3px;
    flex: none;
}

.s1 { width: 173px; }
.s2 { width: 147px; }
.s3 { width: 152px; }

.stab.active {
    width: 114px;
    background: #fff;
    color: #217346;
    font-size: 12px;
    letter-spacing: -.7px;
    font-weight: 700;
    border-left: 1px solid #d4d4d4;
    border-right: 1px solid #d4d4d4;
    border-bottom: 2px solid #217346;
}

.plus {
    margin-left: 34px;
}

.hdots {
    margin: 0 15px 0 80px;
}

.hscroll {
    width: 506px;
    height: 15px;
    display: flex;
    border: 1px solid #ababab;
    background: #e9e9e9;
    margin-top: 3px;
    flex: none;
}

.hb {
    width: 15px;
    background: #fff;
    display: flex;
    align-items: center;
    justify-content: center;
    border-right: 1px solid #ababab;
    flex: none;
}

.hb.right {
    border-right: 0;
    border-left: 1px solid #ababab;
}

.h-thumb {
    width: 444px;
    background: #fff;
    border-right: 1px solid #ababab;
}

.h-track {
    flex: 1;
}
```
